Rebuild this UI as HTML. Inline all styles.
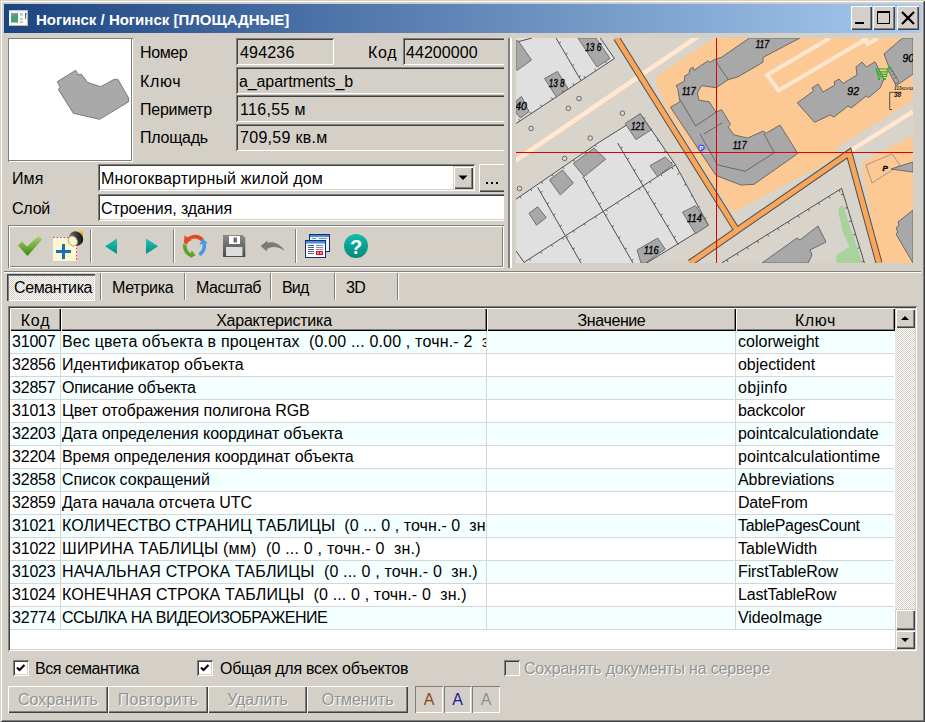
<!DOCTYPE html>
<html><head><meta charset="utf-8">
<style>
*{box-sizing:border-box;margin:0;padding:0}
html,body{width:925px;height:722px;overflow:hidden;background:#d4d0c8}
body{position:relative;font-family:"Liberation Sans",sans-serif;font-size:16px;color:#000}
.a{position:absolute}
.t{position:absolute;white-space:pre;line-height:16px}
.sunk{box-shadow:inset 1px 1px #808080,inset -1px -1px #fff,inset 2px 2px #404040,inset -2px -2px #d4d0c8}
.raised{box-shadow:inset 1px 1px #fff,inset -1px -1px #404040,inset -2px -2px #808080}
.etch{box-shadow:inset 1px 1px #808080,inset -1px -1px #fff,inset 2px 2px #fff,inset -2px -2px #808080}
.dis{color:#939393;text-shadow:1px 1px #fff}
</style></head><body>
<!-- window frame -->
<div class="a" style="left:0;top:0;width:925px;height:722px;box-shadow:inset 1px 1px #d4d0c8,inset -1px -1px #404040,inset 2px 2px #fff,inset -2px -2px #808080"></div>
<!-- title bar -->
<div class="a" style="left:4px;top:4px;width:917px;height:29px;background:linear-gradient(to right,#1c4480,#a6caf0)"></div>
<svg class="a" style="left:9px;top:10px" width="19" height="16" viewBox="0 0 19 16">
<defs><linearGradient id="gic" x1="0" y1="0" x2="0.3" y2="1"><stop offset="0" stop-color="#8aa0c8"/><stop offset="0.5" stop-color="#4a9a8a"/><stop offset="1" stop-color="#3ab050"/></linearGradient></defs>
<rect x="0" y="0" width="19" height="16" fill="#fafaf6"/>
<rect x="0" y="0" width="19" height="1.2" fill="#c8c8c8"/>
<rect x="0" y="15" width="19" height="1" fill="#c0bcb4"/><rect x="18" y="0" width="1" height="16" fill="#c0bcb4"/>
<rect x="2" y="3" width="7" height="9.7" fill="url(#gic)"/>
<rect x="2" y="12" width="7" height="1" fill="#b8b0e0"/>
<rect x="11" y="3" width="2.7" height="2.8" fill="#c4c4c4"/><rect x="11" y="8" width="2.7" height="2" fill="#c4c4c4"/><rect x="11" y="11" width="2.7" height="2" fill="#c4c4c4"/>
<rect x="16" y="3" width="1.2" height="6" fill="#30a050"/><rect x="16" y="3" width="1.2" height="2" fill="#2050a0"/>
</svg>
<div class="t" style="left:36px;top:12px;font-size:15px;font-weight:bold;color:#fff">Ногинск / Ногинск [ПЛОЩАДНЫЕ]</div>
<!-- title buttons -->
<div class="a raised" style="left:851px;top:6px;width:21px;height:24px;background:#d4d0c8"></div>
<div class="a" style="left:855px;top:22px;width:9px;height:2px;background:#000"></div>
<div class="a raised" style="left:873px;top:6px;width:22px;height:24px;background:#d4d0c8"></div>
<div class="a" style="left:877px;top:11px;width:13px;height:13px;border:1px solid #000;border-top-width:2px"></div>
<div class="a raised" style="left:897px;top:6px;width:22px;height:24px;background:#d4d0c8"></div>
<svg class="a" style="left:897px;top:7px" width="22" height="23"><path d="M5 5 L17 17 M17 5 L5 17" stroke="#000" stroke-width="2.2"/></svg>

<!-- preview -->
<div class="a" style="left:8px;top:38px;width:125px;height:124px;background:#fff;box-shadow:inset 1px 1px #808080,inset -1px -1px #fff,inset -2px -2px #808080"></div>
<svg class="a" style="left:8px;top:38px" width="124" height="123">
<polygon points="49.4,43.6 67.7,32.3 70.0,36.7 73.3,36.2 79.7,44.5 92.6,48.7 106.3,41.3 110.0,41.5 120.6,60.1 120.6,63.8 91.6,81.3 65.4,75.3 50.3,51.4 52.1,49.1" fill="#a9a9a9" stroke="#7a7a7a" stroke-width="1"/>
</svg>

<!-- labels -->
<div class="t" style="left:140px;top:45px;letter-spacing:-0.400px">Номер</div>
<div class="t" style="left:140px;top:74px;letter-spacing:0.633px">Ключ</div>
<div class="t" style="left:140px;top:102px;letter-spacing:-0.257px">Периметр</div>
<div class="t" style="left:140px;top:130px;letter-spacing:-0.250px">Площадь</div>
<div class="t" style="left:368px;top:45px;letter-spacing:0.750px">Код</div>
<!-- fields -->
<div class="a sunk" style="left:236px;top:38px;width:98px;height:27px"></div>
<div class="t" style="left:240px;top:45px;letter-spacing:0.180px">494236</div>
<div class="a sunk" style="left:403px;top:38px;width:104px;height:27px"></div>
<div class="t" style="left:406px;top:45px;letter-spacing:0.057px">44200000</div>
<div class="a sunk" style="left:236px;top:67px;width:271px;height:27px"></div>
<div class="t" style="left:239px;top:74px;letter-spacing:-0.115px">a_apartments_b</div>
<div class="a sunk" style="left:236px;top:95px;width:271px;height:27px"></div>
<div class="t" style="left:240px;top:102px;letter-spacing:0.329px">116,55 м</div>
<div class="a sunk" style="left:236px;top:124px;width:271px;height:27px"></div>
<div class="t" style="left:240px;top:130px;letter-spacing:0.290px">709,59 кв.м</div>

<div class="t" style="left:12px;top:171px;letter-spacing:0.100px">Имя</div>
<div class="t" style="left:12px;top:201px;letter-spacing:-0.200px">Слой</div>
<div class="a sunk" style="left:98px;top:164px;width:377px;height:27px;background:#fff"></div>
<div class="t" style="left:101px;top:171px;letter-spacing:0.167px">Многоквартирный жилой дом</div>
<div class="a raised" style="left:453px;top:166px;width:20px;height:23px;background:#d4d0c8;box-shadow:inset 1px 1px #d4d0c8,inset 2px 2px #fff,inset -1px -1px #404040,inset -2px -2px #808080"></div>
<svg class="a" style="left:453px;top:166px" width="20" height="23"><polygon points="5.5,9.5 14.5,9.5 10,14" fill="#000"/></svg>
<div class="a raised" style="left:479px;top:164px;width:28px;height:28px;background:#d4d0c8"></div>
<div class="a" style="left:486px;top:182px;width:2px;height:2px;background:#000"></div>
<div class="a" style="left:491px;top:182px;width:2px;height:2px;background:#000"></div>
<div class="a" style="left:496px;top:182px;width:2px;height:2px;background:#000"></div>
<div class="a sunk" style="left:98px;top:194px;width:409px;height:27px;background:#fff"></div>
<div class="t" style="left:101px;top:201px;letter-spacing:-0.100px">Строения, здания</div>
<div class="a" style="left:504px;top:35px;width:4px;height:189px;background:#d4d0c8"></div>

<!-- toolbar -->
<div class="a etch" style="left:8px;top:225px;width:496px;height:43px"></div>
<svg class="a" style="left:0;top:225px" width="510" height="45" viewBox="0 225 510 45">
<defs>
<linearGradient id="gck" x1="0" y1="0" x2="0" y2="1"><stop offset="0" stop-color="#a8d070"/><stop offset="1" stop-color="#3a8a10"/></linearGradient>
<linearGradient id="gtl" x1="0" y1="0" x2="0" y2="1"><stop offset="0" stop-color="#22c4b4"/><stop offset="1" stop-color="#009080"/></linearGradient>
<linearGradient id="ghl" x1="0" y1="0" x2="0" y2="1"><stop offset="0" stop-color="#10bcaa"/><stop offset="1" stop-color="#00897a"/></linearGradient>
<linearGradient id="gsv" x1="0" y1="0" x2="0" y2="1"><stop offset="0" stop-color="#8a8a8a"/><stop offset="1" stop-color="#4a4a4a"/></linearGradient>
<radialGradient id="gfl" cx="0.4" cy="0.45" r="0.6"><stop offset="0" stop-color="#fffde0"/><stop offset="0.45" stop-color="#d8d4b0"/><stop offset="0.6" stop-color="#707070"/><stop offset="1" stop-color="#202020"/></radialGradient>
</defs>
<!-- separators -->
<rect x="90" y="229" width="1" height="34" fill="#808080"/><rect x="91" y="229" width="1" height="34" fill="#fff"/>
<rect x="173" y="229" width="1" height="34" fill="#808080"/><rect x="174" y="229" width="1" height="34" fill="#fff"/>
<rect x="295" y="229" width="1" height="34" fill="#808080"/><rect x="296" y="229" width="1" height="34" fill="#fff"/>
<!-- check -->
<polygon points="18,245.5 22,241.5 27,246.5 38.5,236 42,239.5 27.5,256" fill="url(#gck)"/>
<!-- add -->
<rect x="53" y="237" width="24" height="24" fill="#fbf8d0"/>
<path d="M53 237.5 H77 M76.5 237 V261" stroke="#e0508a" stroke-width="1" stroke-dasharray="2,1.5" fill="none"/>
<rect x="62" y="244" width="3" height="15" fill="#1a6fb4"/><rect x="56" y="250" width="15" height="3" fill="#1a6fb4"/>
<linearGradient id="gor" x1="0" y1="0" x2="1" y2="1"><stop offset="0" stop-color="#ffd060"/><stop offset="1" stop-color="#e89000"/></linearGradient>
<linearGradient id="gbd" x1="0" y1="0" x2="1" y2="1"><stop offset="0" stop-color="#909090"/><stop offset="0.5" stop-color="#404040"/><stop offset="1" stop-color="#000"/></linearGradient>
<polygon points="75.5,231 83,231 83,238.5" fill="url(#gor)"/>
<ellipse cx="76" cy="238.5" rx="6.8" ry="7.6" transform="rotate(-45 76 238.5)" fill="url(#gbd)"/>
<ellipse cx="72.8" cy="241" rx="4.3" ry="5.3" transform="rotate(-35 72.8 241)" fill="#f7f3d2" stroke="#a89e6a" stroke-width="0.9"/>
<!-- arrows -->
<polygon points="105,246.2 117,238.4 117,254" fill="url(#gtl)"/>
<polygon points="146,238.4 158.2,246.2 146,254" fill="url(#gtl)"/>
<!-- refresh -->
<path d="M185.5 243.8 A9.8 9.8 0 0 1 202.3 240" stroke="#e24a1c" stroke-width="3.6" fill="none"/>
<polygon points="184.6,235.3 183.9,242.6 191.3,240.8" fill="#e24a1c"/>
<path d="M199.3 254.5 A9.8 9.8 0 0 0 204.1 244" stroke="#3b9be6" stroke-width="3.6" fill="none"/>
<polygon points="199.4,244.6 202.9,238.6 207.6,243.2" fill="#3b9be6"/>
<path d="M184.8 244.6 A9.8 9.8 0 0 0 192 255.5" stroke="#5ea22a" stroke-width="3.6" fill="none"/>
<polygon points="191.6,250.3 195.6,255.6 190.2,258" fill="#5ea22a"/>
<!-- save -->
<polygon points="223,235 242.5,235 245.3,238 245.3,257 223,257" fill="url(#gsv)"/>
<rect x="229" y="236" width="11" height="8" fill="#fff"/><rect x="233.5" y="237.5" width="3.5" height="5" fill="#707070"/>
<rect x="226" y="247" width="16.5" height="9" fill="#dcdcdc"/>
<!-- undo -->
<path d="M262 246.5 C268 240.5 277 240 285 251 C278 246 271 246 266 249.5 Z" fill="#7a7a7a"/>
<polygon points="260.5,246 267.5,240.5 267,251.5" fill="#7a7a7a"/>
<!-- forms -->
<rect x="309.5" y="234.5" width="20" height="17" fill="#eaf6ff" stroke="#1a2a6a"/>
<rect x="310" y="235" width="19" height="2" fill="#4a8ae0"/>
<rect x="312" y="238" width="4" height="1" fill="#8090a8"/><rect x="319" y="238" width="8" height="1" fill="#8090a8"/>
<rect x="305.5" y="240.5" width="20" height="17" fill="#fff" stroke="#1a2a6a"/>
<rect x="306" y="241" width="19" height="2.5" fill="#4a8ae0"/>
<rect x="308" y="245" width="6" height="1" fill="#506080"/><rect x="316" y="245" width="7" height="1" fill="#8090a8"/>
<rect x="308" y="247" width="6" height="1" fill="#506080"/><rect x="316" y="247" width="7" height="1" fill="#8090a8"/>
<rect x="308" y="249" width="6" height="1" fill="#506080"/><rect x="316" y="249" width="7" height="1" fill="#8090a8"/>
<rect x="308" y="251" width="6" height="1" fill="#506080"/>
<rect x="308" y="253" width="6" height="1" fill="#506080"/>
<rect x="316" y="251" width="7" height="4" fill="#e01030"/>
<rect x="317.5" y="252" width="1" height="2" fill="#fff"/><rect x="320.5" y="252" width="1" height="2" fill="#fff"/>
<!-- help -->
<circle cx="356" cy="246" r="12" fill="url(#ghl)"/>
<text x="356" y="253.5" text-anchor="middle" font-family="Liberation Sans" font-weight="bold" font-size="20" fill="#fff">?</text>
</svg>


<!-- splitter -->
<div class="a" style="left:508px;top:38px;width:2px;height:230px;background:#808080"></div>
<div class="a" style="left:510px;top:38px;width:2px;height:230px;background:#fff"></div>

<!-- map -->
<div class="a" style="left:516px;top:38px;width:397px;height:225px;background:#d8d4cc;overflow:hidden" ><svg width="397" height="225" viewBox="516 38 397 225" style="position:absolute;left:0;top:0">
<rect x="516" y="38" width="397" height="225" fill="#d8d4cc"/>
<!-- top-left plots block -->
<polygon points="515,37 599.5,37 614.5,58.5 515,124.2" fill="#e0e0e0" stroke="#505050" stroke-width="1"/>
<path d="M556,38 L581,80.5 M516,42.3 L532,38" stroke="#505050" stroke-width="1" fill="none"/>
<g fill="#a8a8a8" stroke="#707070">
<polygon points="516,41 518,40.5 531.5,60 517,70.5 516,69.5"/>
<polygon points="578,38 596,38 610,58.5 597,67"/>
<polygon points="544.5,78.5 557.5,71.5 568,88.5 556.5,97"/>
<polygon points="516,101 521.5,96.5 529,111.5 520.5,118 516,113"/>
</g>
<!-- bottom-left plots block -->
<polygon points="515,199.9 598,143 625,126 640.3,113.7 676,165.7 708.4,225.2 645,264 515,264" fill="#e0e0e0" stroke="#505050" stroke-width="1"/>
<path d="M537.6,187.3 L581,263 M583,176.5 L633,263 M617.6,143 L678.2,244.6 M516,251 L524.6,263 M524.6,262 L676,164.6" stroke="#505050" stroke-width="1" fill="none"/>
<path d="M726.7,259.8L728.0,262.0M736.9,253.5L738.2,255.6M747.1,247.2L748.4,249.3M757.3,240.8L758.6,242.9M767.5,234.5L768.8,236.6M777.7,228.2L779.0,230.3M787.8,221.8L789.2,223.9M798.0,215.5L799.4,217.6M808.2,209.1L809.5,211.3M818.4,202.8L819.7,204.9M828.6,196.5L829.9,198.6M838.8,190.1L840.1,192.3M843.4,194.1L841.0,194.9M847.4,207.5L845.1,208.3M851.5,220.9L849.1,221.6M855.6,234.3L853.2,235.0M859.7,247.7L857.3,248.4M863.8,261.1L861.4,261.8M540.6,192.5L542.5,191.4M547.1,203.8L549.0,202.7M553.5,215.1L555.4,214.0M560.0,226.3L561.9,225.2M566.4,237.6L568.4,236.5M572.9,248.9L574.8,247.8M579.4,260.2L581.3,259.1M586.0,181.7L587.9,180.6M592.5,192.9L594.4,191.8M599.0,204.2L600.9,203.1M605.5,215.5L607.4,214.4M612.0,226.7L613.9,225.6M618.5,238.0L620.4,236.9M625.0,249.2L626.9,248.1M631.5,260.5L633.4,259.4M620.7,148.2L622.6,147.0M627.3,159.3L629.2,158.2M634.0,170.5L635.9,169.4M640.7,181.6L642.5,180.5M647.3,192.8L649.2,191.7M654.0,204.0L655.9,202.9M660.6,215.1L662.5,214.0M667.3,226.3L669.2,225.2M673.9,237.5L675.8,236.3M529.6,258.8L530.8,260.6M540.6,251.7L541.8,253.6M551.5,244.7L552.7,246.5M562.4,237.7L563.6,239.5M573.4,230.6L574.6,232.5M584.3,223.6L585.5,225.4M595.2,216.6L596.4,218.4M606.2,209.5L607.4,211.4M617.1,202.5L618.3,204.3M628.0,195.5L629.2,197.3M639.0,188.4L640.2,190.3M649.9,181.4L651.1,183.2M660.8,174.4L662.0,176.2M671.8,167.3L673.0,169.2M519.9,196.5L521.2,198.3M530.7,189.2L531.9,191.0M541.4,181.8L542.6,183.6M552.1,174.5L553.4,176.3M562.8,167.1L564.1,168.9M573.6,159.8L574.8,161.6M584.3,152.4L585.5,154.2M595.0,145.1L596.2,146.9M643.4,118.8L645.3,117.7M650.2,129.9L652.1,128.8M657.0,141.0L658.9,139.9M663.8,152.1L665.6,151.0M670.5,163.2L672.4,162.1M677.3,174.3L679.2,173.1M684.1,185.4L686.0,184.2M690.9,196.5L692.7,195.3M697.6,207.6L699.5,206.4M704.4,218.7L706.3,217.5M559.0,43.2L560.9,42.1M565.6,54.4L567.5,53.3M572.2,65.6L574.1,64.5M578.8,76.8L580.7,75.7M520.0,120.9L518.8,119.1M530.9,113.7L529.6,111.9M541.7,106.6L540.5,104.7M552.6,99.4L551.3,97.6M563.4,92.2L562.2,90.4M574.2,85.1L573.0,83.2M585.1,77.9L583.9,76.1M595.9,70.8L594.7,68.9M606.8,63.6L605.6,61.8" stroke="#505050" stroke-width="0.9" fill="none"/>
<g fill="#a8a8a8" stroke="#707070">
<polygon points="625.2,123.4 640.3,113.7 651.1,129.9 636,139.6"/>
<polygon points="573.3,163.5 594,148 605.7,159.2 584.1,176.5"/>
<polygon points="549.5,179.8 562.5,170 573.3,183 560.3,194.9"/>
<polygon points="529,213.3 537.6,206.8 546.3,217.6 536.5,225.2"/>
<polygon points="650,165.7 665.2,157 672.8,164.6 657.6,176.5"/>
<polygon points="682.5,212.2 695.5,205.7 708.4,225.2 695.5,233.8"/>
<polygon points="637.1,250 657.6,238.1 665.2,249 645.7,263 641,263"/>
</g>
<!-- manholes -->
<g fill="none" stroke="#606060" stroke-width="0.9">
<circle cx="579" cy="98.5" r="2.3"/><circle cx="568.3" cy="108.3" r="2.3"/><circle cx="531.1" cy="128.4" r="2.3"/>
<circle cx="622.4" cy="113.2" r="2.3"/><circle cx="590.2" cy="138.1" r="2.3"/><circle cx="564.6" cy="158.4" r="2.3"/><circle cx="519.5" cy="188.5" r="2.3"/>
</g>
<!-- light stripe diagonal -->
<path d="M514,161.4 L698,36.3" stroke="#f8c898" stroke-width="6"/><path d="M514,161.4 L698,36.3" stroke="#fde9d9" stroke-width="4.8"/>
<!-- big peach area -->
<path d="M659.5,73.7 Q655,77 656.2,83.4 L666,108 L729,208.5 Q731.5,212.5 736,211 L848,151 L913,115 L913,38 L714.6,38 Z" fill="#fcc995"/>
<!-- lower-right peach -->
<path d="M866,160 Q860,163 862,168 L880,263 L913,263 L913,135 Z" fill="#fcc995"/>
<!-- gray band right -->
<path d="M834,149.5 L913,100.5 L913,131 L862,162 Z" fill="#d8d4cc"/>
<path d="M850,150.8 L913,111.7" stroke="#f8c898" stroke-width="5.5"/><path d="M850,150.8 L913,111.7" stroke="#fde9d9" stroke-width="4.3"/>
<!-- P parking outline -->
<polygon points="866,165 892,154 900,165 872,183" fill="none" stroke="#8a8a8a" stroke-width="0.8"/>
<!-- loop stripe in peach -->
<path d="M830,38 L767,75 L778.6,90.4 L868,38" stroke="#fde6d0" stroke-width="4" fill="none"/>
<path d="M862,38 L868,44 L878,38" stroke="#fde6d0" stroke-width="4" fill="none"/>
<!-- orange roads -->
<path d="M616.5,38 L736,229" stroke="#505050" stroke-width="7"/>
<path d="M690,263 L849,153 L879,263" stroke="#505050" stroke-width="7" fill="none" stroke-linejoin="miter"/>
<path d="M616.5,38 L736,229" stroke="#f9a65a" stroke-width="5"/>
<path d="M690,263 L849,153 L879,263" stroke="#f9a65a" stroke-width="5" fill="none" stroke-linejoin="miter"/>
<!-- green -->
<polygon points="838.4,207.9 842.7,204.6 862.2,263 836.2,263 836.2,255.4 849.2,246.8 842.7,231.6 838.4,212.2" fill="#a8d39c"/>
<!-- fence lines bottom right -->
<path d="M721.6,263 L841.6,188.4 L864.4,263" stroke="#505050" stroke-width="1" fill="none"/>
<g fill="#a8a8a8" stroke="#6a6a6a">
<polygon points="762,263 797,238 800,240 818,226 826,242 810,250 812,255 808,263"/>
<polygon points="913,210 898,222 899,225 896,228 898,232 896,234 913,263"/>
<polygon points="891,169 913,162 913,172"/>
<!-- 117 complex -->
<polygon points="749.5,38 800,38 763,57.4 763,62.2 738,76.8 728,79.7 716.2,87.7 701.6,85.6 697.3,93.1 698.9,100.2 709.2,101.8 716,112.2 721.6,109.7 730.5,124.3 728.1,126.8 733.8,134.9 747.6,138.1 763,131.1 766.2,133.2 780,125.1 797.8,153.5 754,184.3 741,185.1 716,175.4 670.5,107.3 677.8,103 680,101.8 677.8,88.8 676.2,85.6 684.3,81.2 684.9,75.8 689.2,73.7 689.7,69.4 693,67.2 694,70.4 708.1,60.7 709.7,62.3 715.7,59.1 721.1,57.5 740,44.5"/>
<!-- building 92 -->
<polygon points="797.3,102.9 813.5,91 812,88 818,84 823,92 835,85 834,82 839,79 843,83.5 857,75 856,67 862,62 866.5,67 875,61.8 884,79 880,88 868.7,97.5 866,96 851.4,108 848,106 834,117 830,115 814.6,122.3"/>
<!-- building 90 -->
<polygon points="884,54 899,41 903,38 913,38 913,74 896,86"/>
</g>
<path d="M716.2,61.8 L728.6,80.2 M680.3,100 L695.7,126 L716,112.2 M717.6,164.9 L745.1,171.3 L774.3,152.7 L763.8,133.2 M703.8,134.1 L722.4,122.7 M700,134 L717.6,164.9" stroke="#6a6a6a" fill="none"/>
<!-- cart -->
<path d="M888,70.5 L891.5,69 L899,82 L895.5,84 Z M889.8,72.5 L893,71 M891.6,75.5 L894.8,74 M893.4,78.5 L896.6,77" stroke="#606060" stroke-width="0.8" fill="#a8a8a8"/>
<g stroke="#22b422" fill="none" stroke-width="1.2">
<path d="M876,69 L887.5,69 L886.5,76.5 L878.5,76.5 Z"/><path d="M877,71.8 L886.8,71.8 M877.8,74.3 L886.3,74.3"/><path d="M887.5,69 L889.5,67.3 L891.8,67.3"/>
</g><circle cx="879" cy="78.9" r="1.2" fill="#22b422"/><circle cx="884.8" cy="78.9" r="1.2" fill="#22b422"/>
<!-- flag -->
<path d="M889.7,109.5 L889.7,92.3 L901.4,92.3 M889.7,109.5 L892,109.5" stroke="#404040" stroke-width="0.9" fill="none"/>
<text x="894.2" y="89.8" font-family="Liberation Serif" font-style="italic" font-size="6.5" fill="#111" textLength="19" lengthAdjust="spacingAndGlyphs">Школа</text>
<text x="894" y="97" font-family="Liberation Sans" font-style="italic" font-weight="bold" font-size="6.5" fill="#111">38</text>
<!-- labels -->
<g font-family="Liberation Sans" font-style="italic" font-size="11" fill="#000" stroke="#000" stroke-width="0.35">
<text x="585.2" y="51" textLength="16.3" lengthAdjust="spacingAndGlyphs">13 6</text>
<text x="548.7" y="86.6" textLength="15.900000000000023" lengthAdjust="spacingAndGlyphs">13 8</text>
<text x="515.2" y="110.4" textLength="11.599999999999955" lengthAdjust="spacingAndGlyphs">40</text>
<text x="630.9000000000001" y="129.9" textLength="14.099999999999955" lengthAdjust="spacingAndGlyphs">121</text>
<text x="681.7" y="95.3" textLength="13.8" lengthAdjust="spacingAndGlyphs">117</text>
<text x="755.4000000000001" y="47.7" textLength="13.8" lengthAdjust="spacingAndGlyphs">117</text>
<text x="847.3000000000001" y="94.6" textLength="11.699999999999978" lengthAdjust="spacingAndGlyphs">92</text>
<text x="902.5" y="61.8" textLength="11.500000000000046" lengthAdjust="spacingAndGlyphs">90</text>
<text x="732.7" y="149.4" textLength="13.8" lengthAdjust="spacingAndGlyphs">117</text>
<text x="687.1" y="221.9" textLength="14.8" lengthAdjust="spacingAndGlyphs">114</text>
<text x="643.8000000000001" y="253.7" textLength="14.900000000000023" lengthAdjust="spacingAndGlyphs">116</text>
<text x="882.5" y="171.1" font-size="8" font-weight="bold">P</text>
</g>
<!-- parking P -->
<circle cx="701.3" cy="147.8" r="3.4" fill="#4a5af0"/><text x="699.3" y="150.3" font-family="Liberation Sans" font-size="6" font-weight="bold" fill="#fff">P</text>
<text x="703" y="154" font-family="Liberation Sans" font-size="5" fill="#fff" opacity="0.8">Dk</text>
<!-- red crosshair -->
<rect x="516" y="152" width="397" height="1" fill="#e00000"/>
<rect x="716" y="38" width="1" height="225" fill="#e00000"/>
</svg>
</div>

<!-- tabs -->
<div class="a" style="left:4px;top:271px;width:917px;height:1px;background:#808080"></div>
<div class="a" style="left:4px;top:272px;width:917px;height:1px;background:#fff"></div>
<div class="a" style="left:7px;top:274px;width:88px;height:27px;background-color:#fff;background-image:repeating-conic-gradient(#d4d0c8 0 25%,#fff 0 50%);background-size:2px 2px;box-shadow:inset 1px 1px #404040,inset 2px 2px #808080,inset -1px -1px #fff"></div>
<div class="t" style="left:14px;top:280px;letter-spacing:-0.400px">Семантика</div>
<div class="a" style="left:100px;top:273px;width:1px;height:27px;background:#808080"></div>
<div class="a" style="left:101px;top:273px;width:1px;height:27px;background:#fff"></div>
<div class="a" style="left:184px;top:273px;width:1px;height:27px;background:#808080"></div>
<div class="a" style="left:185px;top:273px;width:1px;height:27px;background:#fff"></div>
<div class="a" style="left:270px;top:273px;width:1px;height:27px;background:#808080"></div>
<div class="a" style="left:271px;top:273px;width:1px;height:27px;background:#fff"></div>
<div class="a" style="left:334px;top:273px;width:1px;height:27px;background:#808080"></div>
<div class="a" style="left:335px;top:273px;width:1px;height:27px;background:#fff"></div>
<div class="a" style="left:397px;top:273px;width:1px;height:27px;background:#808080"></div>
<div class="a" style="left:398px;top:273px;width:1px;height:27px;background:#fff"></div>
<div class="t" style="left:112px;top:280px;letter-spacing:-0.267px">Метрика</div>
<div class="t" style="left:196px;top:280px;letter-spacing:-0.500px">Масштаб</div>
<div class="t" style="left:282px;top:280px;letter-spacing:-0.850px">Вид</div>
<div class="t" style="left:346px;top:280px;letter-spacing:-0.600px">3D</div>

<!-- table -->
<div class="a" style="left:8px;top:306px;width:909px;height:345px;background:#fff;box-shadow:inset 1px 1px #808080,inset -1px -1px #fff,inset 2px 2px #404040,inset -2px -2px #d4d0c8"></div>
<div class="a" style="left:10px;top:308px;width:51px;height:23px;background:#d4d0c8;box-shadow:inset 1px 1px #fff,inset -1px -1px #000,inset -2px -2px #808080"></div>
<div class="t" style="left:10px;top:313px;width:51px;text-align:center;letter-spacing:0.750px">Код</div>
<div class="a" style="left:61px;top:308px;width:426px;height:23px;background:#d4d0c8;box-shadow:inset 1px 1px #fff,inset -1px -1px #000,inset -2px -2px #808080"></div>
<div class="t" style="left:61px;top:313px;width:426px;text-align:center;letter-spacing:-0.238px">Характеристика</div>
<div class="a" style="left:487px;top:308px;width:249px;height:23px;background:#d4d0c8;box-shadow:inset 1px 1px #fff,inset -1px -1px #000,inset -2px -2px #808080"></div>
<div class="t" style="left:487px;top:313px;width:249px;text-align:center;letter-spacing:-0.400px">Значение</div>
<div class="a" style="left:736px;top:308px;width:159px;height:23px;background:#d4d0c8;box-shadow:inset 1px 1px #fff,inset -1px -1px #000,inset -2px -2px #808080"></div>
<div class="t" style="left:736px;top:313px;width:159px;text-align:center;letter-spacing:0.633px">Ключ</div>
<div class="a" style="left:10px;top:331px;width:884px;height:22px;background:#f4ffff"></div>
<div class="a" style="left:10px;top:353px;width:884px;height:1px;background:#d6d6d6"></div>
<div class="t" style="left:12px;top:334px;letter-spacing:-0.200px">31007</div>
<div class="t" style="left:62px;top:334px;width:424px;overflow:hidden;letter-spacing:0.175px">Вес цвета объекта в процентах  (0.00 ... 0.00 , точн.- 2  зн.)</div>
<div class="t" style="left:738px;top:334px;letter-spacing:0.010px">colorweight</div>
<div class="a" style="left:10px;top:354px;width:884px;height:22px;background:#ffffff"></div>
<div class="a" style="left:10px;top:376px;width:884px;height:1px;background:#d6d6d6"></div>
<div class="t" style="left:12px;top:357px;letter-spacing:-0.200px">32856</div>
<div class="t" style="left:62px;top:357px;width:424px;overflow:hidden;letter-spacing:-0.010px">Идентификатор объекта</div>
<div class="t" style="left:738px;top:357px;letter-spacing:-0.030px">objectident</div>
<div class="a" style="left:10px;top:377px;width:884px;height:22px;background:#f4ffff"></div>
<div class="a" style="left:10px;top:399px;width:884px;height:1px;background:#d6d6d6"></div>
<div class="t" style="left:12px;top:380px;letter-spacing:-0.200px">32857</div>
<div class="t" style="left:62px;top:380px;width:424px;overflow:hidden;letter-spacing:-0.247px">Описание объекта</div>
<div class="t" style="left:738px;top:380px;letter-spacing:0.350px">objinfo</div>
<div class="a" style="left:10px;top:400px;width:884px;height:22px;background:#ffffff"></div>
<div class="a" style="left:10px;top:422px;width:884px;height:1px;background:#d6d6d6"></div>
<div class="t" style="left:12px;top:403px;letter-spacing:-0.200px">31013</div>
<div class="t" style="left:62px;top:403px;width:424px;overflow:hidden;letter-spacing:-0.046px">Цвет отображения полигона RGB</div>
<div class="t" style="left:738px;top:403px;letter-spacing:-0.188px">backcolor</div>
<div class="a" style="left:10px;top:423px;width:884px;height:22px;background:#f4ffff"></div>
<div class="a" style="left:10px;top:445px;width:884px;height:1px;background:#d6d6d6"></div>
<div class="t" style="left:12px;top:426px;letter-spacing:-0.200px">32203</div>
<div class="t" style="left:62px;top:426px;width:424px;overflow:hidden;letter-spacing:-0.039px">Дата определения координат объекта</div>
<div class="t" style="left:738px;top:426px;letter-spacing:-0.042px">pointcalculationdate</div>
<div class="a" style="left:10px;top:446px;width:884px;height:22px;background:#ffffff"></div>
<div class="a" style="left:10px;top:468px;width:884px;height:1px;background:#d6d6d6"></div>
<div class="t" style="left:12px;top:449px;letter-spacing:-0.200px">32204</div>
<div class="t" style="left:62px;top:449px;width:424px;overflow:hidden;letter-spacing:-0.097px">Время определения координат объекта</div>
<div class="t" style="left:738px;top:449px;letter-spacing:0.079px">pointcalculationtime</div>
<div class="a" style="left:10px;top:469px;width:884px;height:22px;background:#f4ffff"></div>
<div class="a" style="left:10px;top:491px;width:884px;height:1px;background:#d6d6d6"></div>
<div class="t" style="left:12px;top:472px;letter-spacing:-0.200px">32858</div>
<div class="t" style="left:62px;top:472px;width:424px;overflow:hidden;letter-spacing:-0.012px">Список сокращений</div>
<div class="t" style="left:738px;top:472px;letter-spacing:-0.050px">Abbreviations</div>
<div class="a" style="left:10px;top:492px;width:884px;height:22px;background:#ffffff"></div>
<div class="a" style="left:10px;top:514px;width:884px;height:1px;background:#d6d6d6"></div>
<div class="t" style="left:12px;top:495px;letter-spacing:-0.200px">32859</div>
<div class="t" style="left:62px;top:495px;width:424px;overflow:hidden;letter-spacing:-0.032px">Дата начала отсчета UTC</div>
<div class="t" style="left:738px;top:495px;letter-spacing:-0.186px">DateFrom</div>
<div class="a" style="left:10px;top:515px;width:884px;height:22px;background:#f4ffff"></div>
<div class="a" style="left:10px;top:537px;width:884px;height:1px;background:#d6d6d6"></div>
<div class="t" style="left:12px;top:518px;letter-spacing:-0.200px">31021</div>
<div class="t" style="left:62px;top:518px;width:424px;overflow:hidden;letter-spacing:0.072px">КОЛИЧЕСТВО СТРАНИЦ ТАБЛИЦЫ  (0 ... 0 , точн.- 0  зн.)</div>
<div class="t" style="left:738px;top:518px;letter-spacing:-0.307px">TablePagesCount</div>
<div class="a" style="left:10px;top:538px;width:884px;height:22px;background:#ffffff"></div>
<div class="a" style="left:10px;top:560px;width:884px;height:1px;background:#d6d6d6"></div>
<div class="t" style="left:12px;top:541px;letter-spacing:-0.200px">31022</div>
<div class="t" style="left:62px;top:541px;width:424px;overflow:hidden;letter-spacing:0.213px">ШИРИНА ТАБЛИЦЫ (мм)  (0 ... 0 , точн.- 0  зн.)</div>
<div class="t" style="left:738px;top:541px;letter-spacing:0.000px">TableWidth</div>
<div class="a" style="left:10px;top:561px;width:884px;height:22px;background:#f4ffff"></div>
<div class="a" style="left:10px;top:583px;width:884px;height:1px;background:#d6d6d6"></div>
<div class="t" style="left:12px;top:564px;letter-spacing:-0.200px">31023</div>
<div class="t" style="left:62px;top:564px;width:424px;overflow:hidden;letter-spacing:0.180px">НАЧАЛЬНАЯ СТРОКА ТАБЛИЦЫ  (0 ... 0 , точн.- 0  зн.)</div>
<div class="t" style="left:738px;top:564px;letter-spacing:-0.108px">FirstTableRow</div>
<div class="a" style="left:10px;top:584px;width:884px;height:22px;background:#ffffff"></div>
<div class="a" style="left:10px;top:606px;width:884px;height:1px;background:#d6d6d6"></div>
<div class="t" style="left:12px;top:587px;letter-spacing:-0.200px">31024</div>
<div class="t" style="left:62px;top:587px;width:424px;overflow:hidden;letter-spacing:0.143px">КОНЕЧНАЯ СТРОКА ТАБЛИЦЫ  (0 ... 0 , точн.- 0  зн.)</div>
<div class="t" style="left:738px;top:587px;letter-spacing:-0.209px">LastTableRow</div>
<div class="a" style="left:10px;top:607px;width:884px;height:22px;background:#f4ffff"></div>
<div class="a" style="left:10px;top:629px;width:884px;height:1px;background:#d6d6d6"></div>
<div class="t" style="left:12px;top:610px;letter-spacing:-0.200px">32774</div>
<div class="t" style="left:62px;top:610px;width:424px;overflow:hidden;letter-spacing:-0.512px">ССЫЛКА НА ВИДЕОИЗОБРАЖЕНИЕ</div>
<div class="t" style="left:738px;top:610px;letter-spacing:-0.111px">VideoImage</div>
<div class="a" style="left:60px;top:331px;width:1px;height:299px;background:#d6d6d6"></div>
<div class="a" style="left:486px;top:331px;width:1px;height:299px;background:#d6d6d6"></div>
<div class="a" style="left:735px;top:331px;width:1px;height:299px;background:#d6d6d6"></div>
<div class="a" style="left:895px;top:308px;width:20px;height:341px;background-color:#fff;background-image:repeating-conic-gradient(#d4d0c8 0 25%,#fff 0 50%);background-size:2px 2px"></div>
<div class="a raised" style="left:895px;top:308px;width:20px;height:20px;background:#d4d0c8;box-shadow:inset 1px 1px #d4d0c8,inset 2px 2px #fff,inset -1px -1px #404040,inset -2px -2px #808080"></div>
<svg class="a" style="left:895px;top:308px" width="20" height="20"><polygon points="6,12 14,12 10,8" fill="#000"/></svg>
<div class="a" style="left:895px;top:609px;width:20px;height:21px;background:#d4d0c8;box-shadow:inset 1px 1px #d4d0c8,inset 2px 2px #fff,inset -1px -1px #404040,inset -2px -2px #808080"></div>
<div class="a" style="left:895px;top:630px;width:20px;height:19px;background:#d4d0c8;box-shadow:inset 1px 1px #d4d0c8,inset 2px 2px #fff,inset -1px -1px #404040,inset -2px -2px #808080"></div>
<svg class="a" style="left:895px;top:630px" width="20" height="19"><polygon points="6,8 14,8 10,12" fill="#000"/></svg>

<!-- bottom -->
<div class="a" style="left:13px;top:660px;width:16px;height:16px;background:#fff;box-shadow:inset 1px 1px #808080,inset -1px -1px #fff,inset 2px 2px #404040,inset -2px -2px #d4d0c8"></div><svg class="a" style="left:13px;top:660px" width="16" height="16"><path d="M4 7.5 L6.5 10 L11.5 5" stroke="#000" stroke-width="2" fill="none"/></svg>
<div class="t" style="left:35px;top:661px;letter-spacing:-0.458px">Вся семантика</div>
<div class="a" style="left:197px;top:660px;width:16px;height:16px;background:#fff;box-shadow:inset 1px 1px #808080,inset -1px -1px #fff,inset 2px 2px #404040,inset -2px -2px #d4d0c8"></div><svg class="a" style="left:197px;top:660px" width="16" height="16"><path d="M4 7.5 L6.5 10 L11.5 5" stroke="#000" stroke-width="2" fill="none"/></svg>
<div class="t" style="left:220px;top:661px;letter-spacing:-0.255px">Общая для всех объектов</div>
<div class="a" style="left:504px;top:660px;width:16px;height:16px;background:#d4d0c8;box-shadow:inset 1px 1px #808080,inset -1px -1px #fff,inset 2px 2px #404040,inset -2px -2px #d4d0c8"></div>
<div class="t dis" style="left:524px;top:661px;letter-spacing:-0.193px">Сохранять документы на сервере</div>
<div class="a raised" style="left:8px;top:686px;width:100px;height:27px;background:#d4d0c8"></div>
<div class="t dis" style="left:8px;top:692px;width:100px;text-align:center;letter-spacing:0.062px">Сохранить</div>
<div class="a raised" style="left:108px;top:686px;width:100px;height:27px;background:#d4d0c8"></div>
<div class="t dis" style="left:108px;top:692px;width:100px;text-align:center;letter-spacing:0.250px">Повторить</div>
<div class="a raised" style="left:208px;top:686px;width:99px;height:27px;background:#d4d0c8"></div>
<div class="t dis" style="left:208px;top:692px;width:99px;text-align:center;letter-spacing:-0.083px">Удалить</div>
<div class="a raised" style="left:307px;top:686px;width:101px;height:27px;background:#d4d0c8"></div>
<div class="t dis" style="left:307px;top:692px;width:101px;text-align:center;letter-spacing:-0.171px">Отменить</div>
<div class="a" style="left:415px;top:686px;width:28px;height:27px;box-shadow:inset 1px 1px #808080,inset -1px -1px #fff"></div>
<div class="t" style="left:415px;top:692px;width:28px;text-align:center;color:#8a4a10">A</div>
<div class="a" style="left:444px;top:686px;width:27px;height:27px;box-shadow:inset 1px 1px #808080,inset -1px -1px #fff"></div>
<div class="t" style="left:444px;top:692px;width:27px;text-align:center;color:#1a1a9a">A</div>
<div class="a" style="left:472px;top:686px;width:28px;height:27px;box-shadow:inset 1px 1px #808080,inset -1px -1px #fff"></div>
<div class="t" style="left:472px;top:692px;width:28px;text-align:center;color:#909090">A</div>
</body></html>
